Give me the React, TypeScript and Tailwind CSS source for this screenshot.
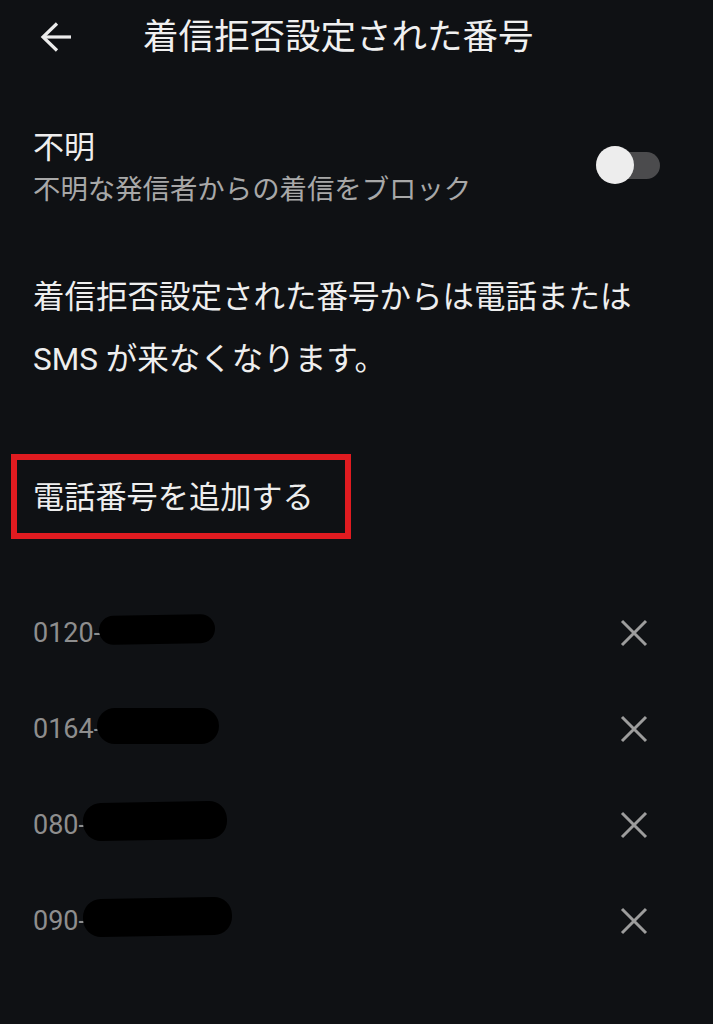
import React from 'react'

const numbers = [
  { prefix: '0120-', blob: 'w-[116px] h-[29px] -ml-[2px] -mt-[8px] rounded-[16px] -rotate-1' },
  { prefix: '0164-', blob: 'w-[122px] h-[36px] -ml-[4px] -mt-[6px] rounded-[18px]' },
  { prefix: '080-', blob: 'w-[144px] h-[38px] -ml-[3px] -mt-[8px] rounded-[18px] -rotate-1' },
  { prefix: '090-', blob: 'w-[149px] h-[38px] -ml-[3px] -mt-[8px] rounded-[18px] -rotate-1' },
]

function BackArrow() {
  return (
    <svg width="32" height="32" viewBox="0 0 32 32" fill="none" stroke="#ececec" strokeWidth="3.2">
      <path d="M31 16H3" />
      <path d="M17 2.5L3 16l14 13.5" />
    </svg>
  )
}

function CloseIcon() {
  return (
    <svg width="28" height="28" viewBox="0 0 28 28" fill="none" stroke="#9d9d9d" strokeWidth="3">
      <path d="M2 2l24 24M26 2L2 26" />
    </svg>
  )
}

function Toggle() {
  return (
    <div className="relative w-[64px] h-[38px] -mt-[8px]">
      <div className="absolute left-0 right-0 top-[6px] h-[27px] rounded-full bg-[#4b4b4d]" />
      <div className="absolute left-0 top-0 w-[38px] h-[38px] rounded-full bg-[#ededed]" />
    </div>
  )
}

export default function App() {
  return (
    <div className="min-h-[1024px] w-full bg-[#0f1114] text-[#eeeeee] font-['Roboto','Noto_Sans_CJK_JP',sans-serif]">
      {/* header */}
      <div className="flex items-center h-[74px] pl-[40px]">
        <BackArrow />
        <div className="ml-[71px] text-[35.5px] leading-[40px] text-[#f0f0f0]">着信拒否設定された番号</div>
      </div>

      {/* unknown callers */}
      <div className="flex items-center justify-between mt-[54px] pl-[33px] pr-[53px]">
        <div>
          <div className="text-[31px] leading-[40px]">不明</div>
          <div className="mt-[2px] text-[27.4px] leading-[40px] text-[#a8a8a8]">不明な発信者からの着信をブロック</div>
        </div>
        <Toggle />
      </div>

      <p className="mt-[57px] px-[33px] text-[31.5px] leading-[62px] text-[#eeeeee]">
        着信拒否設定された番号からは電話または
        <br />
        SMS が来なくなります。
      </p>

      {/* add number */}
      <div className="mt-[87px] px-[33px]">
        <div className="relative inline-block text-[31.2px] leading-[40px] text-[#eeeeee]">
          電話番号を追加する
          <span className="absolute -left-[22px] -top-[24px] w-[340px] h-[85px] border-[6px] border-[#e01b20]" />
        </div>
      </div>

      {/* blocked numbers */}
      <div className="mt-[67px]">
        {numbers.map((n) => (
          <div key={n.prefix} className="flex items-center justify-between h-[96px] pl-[33px] pr-[65px]">
            <div className="flex items-center">
              <span className="text-[27px] leading-[32px] text-[#8e8e8e]">{n.prefix}</span>
              <span className={`inline-block bg-black ${n.blob}`} />
            </div>
            <CloseIcon />
          </div>
        ))}
      </div>
    </div>
  )
}
